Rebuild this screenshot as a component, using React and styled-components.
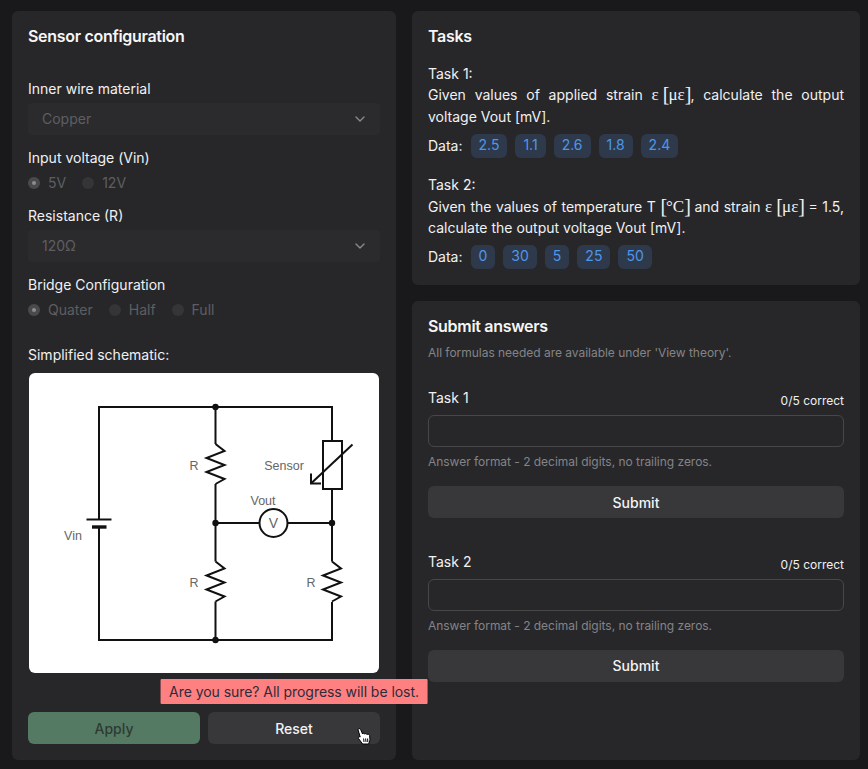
import React from 'react';
import styled, { createGlobalStyle } from 'styled-components';
import { ChevronDown } from 'lucide-react';

const Global = createGlobalStyle`
	html, body {
		margin: 0;
		padding: 0;
		height: 769px;
		overflow: hidden;
		background: #19191b;
	}
	* {
		box-sizing: border-box;
	}
`;

const Page = styled.div`
	display: grid;
	grid-template-columns: 384px 448px;
	gap: 16px;
	width: 868px;
	height: 769px;
	padding: 11px 8px 9px 12px;
	font-family: Inter, "Liberation Sans", sans-serif;
	font-size: 14px;
	line-height: 21.7px;
	color: #f1f1f2;
`;

const Card = styled.section`
	display: flex;
	flex-direction: column;
	flex: ${props => (props.$grow ? 1 : 'none')};
	padding: 16px;
	border-radius: 6px;
	background: #27272a;
`;

const RightColumn = styled.div`
	display: flex;
	flex-direction: column;
	gap: 16px;
	min-height: 0;
`;

const Heading = styled.h2`
	margin: 0;
	font-size: 16px;
	line-height: 18px;
	font-weight: 600;
	letter-spacing: -0.3px;
	color: #f6f6f7;
`;

const FieldLabel = styled.div`
	margin-top: ${props => props.$top || 12}px;
`;

const SelectBox = styled.div`
	display: flex;
	align-items: center;
	justify-content: space-between;
	height: 32px;
	margin-top: 3px;
	padding: 0 12px 0 14px;
	border-radius: 4px;
	background: #2b2b2e;
	color: #5e5e61;
	svg {
		color: #8b8b8e;
	}
`;

const RadioRow = styled.div`
	display: flex;
	gap: 16px;
	margin-top: 4px;
`;

const RadioItem = styled.div`
	display: flex;
	align-items: center;
	gap: 8px;
	color: #5e5e61;
`;

const RadioDot = styled.span`
	display: flex;
	align-items: center;
	justify-content: center;
	width: 12px;
	height: 12px;
	border-radius: 50%;
	background: ${props => (props.$on ? '#4a4a4d' : '#353538')};
	&::after {
		content: '';
		display: ${props => (props.$on ? 'block' : 'none')};
		width: 4px;
		height: 4px;
		border-radius: 50%;
		background: #8d8d90;
	}
`;

const SchematicBox = styled.div`
	width: 350px;
	height: 300px;
	margin: 7px auto 0;
	border-radius: 6px;
	background: #fff;
	svg {
		display: block;
	}
`;

const ButtonRow = styled.div`
	display: grid;
	grid-template-columns: 1fr 1fr;
	gap: 8px;
	margin-top: auto;
`;

const Button = styled.button`
	position: relative;
	height: 32px;
	width: 100%;
	padding: 0;
	border: 0;
	border-radius: 6px;
	background: ${props => props.$bg || '#38383b'};
	color: ${props => props.$fg || '#f3f3f4'};
	font-family: inherit;
	font-size: 14px;
	font-weight: 500;
`;

const Tooltip = styled.div`
	position: absolute;
	left: 50%;
	bottom: calc(100% + 8px);
	transform: translateX(-50%);
	height: 25px;
	padding: 0 8.5px;
	border-radius: 1px;
	background: #ff8080;
	color: #2c2c3c;
	font-size: 14px;
	font-weight: 400;
	line-height: 25px;
	white-space: nowrap;
	letter-spacing: -0.05px;
`;

const Cursor = styled.svg`
	position: absolute;
	left: 149px;
	top: 16px;
`;

const TaskBlock = styled.div`
	margin-top: ${props => props.$top}px;
`;

const Justified = styled.p`
	margin: 0;
	text-align: justify;
`;

const Formula = styled.span`
	display: inline-block;
	font-family: "Liberation Serif", serif;
	font-size: 17px;
	line-height: 14px;
	white-space: nowrap;
`;

const Bracket = styled.span`
	font-size: 20px;
	font-weight: 400;
	line-height: 0;
	letter-spacing: -1px;
	vertical-align: -1px;
`;

const DataRow = styled.div`
	display: flex;
	align-items: center;
	gap: 8px;
	margin-top: ${props => props.$top}px;
`;

const Pill = styled.span`
	height: 24px;
	padding: 0 8px;
	border-radius: 6px;
	background: #2e3a4b;
	color: #4f96ea;
	line-height: 22px;
`;

const Note = styled.div`
	margin-top: ${props => props.$top || 0}px;
	font-size: 12px;
	line-height: 18.6px;
	letter-spacing: -0.03px;
	color: #848487;
`;

const AnswerHead = styled.div`
	display: flex;
	justify-content: space-between;
	align-items: flex-end;
	margin-top: ${props => props.$top}px;
`;

const AnswerName = styled.span`
	padding-bottom: 1px;
`;

const Score = styled.span`
	font-size: 12px;
	line-height: 18.6px;
	font-weight: 400;
	margin-bottom: -1px;
`;

const AnswerInput = styled.input`
	display: block;
	width: 100%;
	height: 32px;
	margin-top: 6px;
	padding: 0 12px;
	border: 1px solid #47474a;
	border-radius: 6px;
	background: #27272a;
	color: #f1f1f2;
	font: inherit;
	outline: none;
`;

const SubmitWrap = styled.div`
	margin-top: 14px;
`;

const zig = (x, y) =>
	`M${x} ${y} L${x + 9} ${y + 7} L${x - 9} ${y + 14} L${x + 9} ${y + 21} L${x - 9} ${y + 28} L${x + 9} ${y + 35} L${x} ${y + 40}`;

const Schematic = () => (
	<svg width="350" height="300" viewBox="0 0 350 300">
		<g fill="none" stroke="#111" strokeWidth="2">
			<path d="M70 146.5 V34 H303 V68 M303 116 V188.5" />
			<path d="M70 154 V267 H303 V229" />
			<path d="M186.5 34 V71 M186.5 111 V188.5 M186.5 228.5 V267" />
			<path d={zig(186.5, 71)} />
			<path d={zig(186.5, 188.5)} />
			<path d={zig(303, 188.5)} />
			<path d="M186.5 150 H230.5 M258.5 150 H303" />
			<circle cx="244.5" cy="150" r="14" />
			<rect x="294" y="68" width="19" height="48" />
			<path d="M323.5 71.5 L282.5 110" />
			<path d="M282 100.5 V110.5 H292" />
			<path d="M57.5 146.5 H82.5" />
			<path d="M63 154 H77.5" strokeWidth="3.4" />
		</g>
		<g fill="#111">
			<circle cx="186.5" cy="34" r="3.2" />
			<circle cx="186.5" cy="150" r="3.2" />
			<circle cx="303" cy="150" r="3.2" />
			<circle cx="186.5" cy="267" r="3.2" />
		</g>
		<g fill="#666" fontFamily="'Liberation Sans', sans-serif" fontSize="12.5" textAnchor="middle">
			<text x="165" y="97">R</text>
			<text x="165" y="214">R</text>
			<text x="282" y="214">R</text>
			<text x="255" y="97">Sensor</text>
			<text x="234" y="132">Vout</text>
			<text x="44" y="167">Vin</text>
			<text x="244.5" y="155" fontSize="14">V</text>
		</g>
	</svg>
);

const HandCursor = () => (
	<Cursor width="14" height="17" viewBox="0 0 14 17">
		<path
			d="M1 1.6 C1.4 .4 3 .3 3.6 1.5 L5.6 6 C6 5 7.4 5 7.8 6.2 C8.2 5.3 9.6 5.4 10 6.6 C10.6 5.9 12.4 6.2 12.6 7.6 L13 12 L11.6 16 H5.6 L1.6 10.6 C.8 9.4 1.6 8.2 3.2 9 Z"
			fill="#fff"
			stroke="#000"
			strokeWidth="1"
		/>
		<path d="M6.6 10.5 L7 14 M8.6 10.5 L9 14 M10.6 10.5 L10.8 14" stroke="#000" strokeWidth="1" />
	</Cursor>
);

const Radios = ({ items }) => (
	<RadioRow>
		{items.map((item, i) => (
			<RadioItem key={item}>
				<RadioDot $on={i === 0} />
				{item}
			</RadioItem>
		))}
	</RadioRow>
);

const Answer = ({ name, top }) => (
	<>
		<AnswerHead $top={top}>
			<AnswerName>{name}</AnswerName>
			<Score>0/5 correct</Score>
		</AnswerHead>
		<AnswerInput />
		<Note $top={6}>Answer format - 2 decimal digits, no trailing zeros.</Note>
		<SubmitWrap>
			<Button>Submit</Button>
		</SubmitWrap>
	</>
);

const DataLine = ({ values, top }) => (
	<DataRow $top={top}>
		Data:
		{values.map((v, i) => (
			<Pill key={i}>{v}</Pill>
		))}
	</DataRow>
);

const Unit = ({ children }) => (
	<>
		<Bracket>[</Bracket>
		{children}
		<Bracket>]</Bracket>
	</>
);

export default function App() {
	return (
		<Page>
			<Global />
			<Card>
				<Heading>Sensor configuration</Heading>
				<FieldLabel $top={33}>Inner wire material</FieldLabel>
				<SelectBox>
					Copper
					<ChevronDown size={16} strokeWidth={2} />
				</SelectBox>
				<FieldLabel>Input voltage (Vin)</FieldLabel>
				<Radios items={['5V', '12V']} />
				<FieldLabel $top={11}>Resistance (R)</FieldLabel>
				<SelectBox>
					120Ω
					<ChevronDown size={16} strokeWidth={2} />
				</SelectBox>
				<FieldLabel $top={11.7}>Bridge Configuration</FieldLabel>
				<Radios items={['Quater', 'Half', 'Full']} />
				<FieldLabel $top={23.3}>Simplified schematic:</FieldLabel>
				<SchematicBox>
					<Schematic />
				</SchematicBox>
				<ButtonRow>
					<Button $bg="#557a64" $fg="#2e3a33">Apply</Button>
					<Button>
						Reset
						<Tooltip>Are you sure? All progress will be lost.</Tooltip>
						<HandCursor />
					</Button>
				</ButtonRow>
			</Card>
			<RightColumn>
				<Card>
					<Heading>Tasks</Heading>
					<TaskBlock $top={17.5}>
						Task 1:
						<Justified>
							Given values of applied strain <Formula>ε <Unit>με</Unit></Formula>, calculate the output voltage Vout [mV].
						</Justified>
					</TaskBlock>
					<DataLine top={6.5} values={['2.5', '1.1', '2.6', '1.8', '2.4']} />
					<TaskBlock $top={15.8}>
						Task 2:
						<Justified>
							Given the values of temperature T <Formula><Unit>°C</Unit></Formula> and strain <Formula>ε <Unit>με</Unit></Formula> = 1.5, calculate the output voltage Vout [mV].
						</Justified>
					</TaskBlock>
					<DataLine top={6.1} values={['0', '30', '5', '25', '50']} />
				</Card>
				<Card $grow>
					<Heading>Submit answers</Heading>
					<Note $top={9}>All formulas needed are available under 'View theory'.</Note>
					<Answer name="Task 1" top={24} />
					<Answer name="Task 2" top={32.5} />
				</Card>
			</RightColumn>
		</Page>
	);
}
